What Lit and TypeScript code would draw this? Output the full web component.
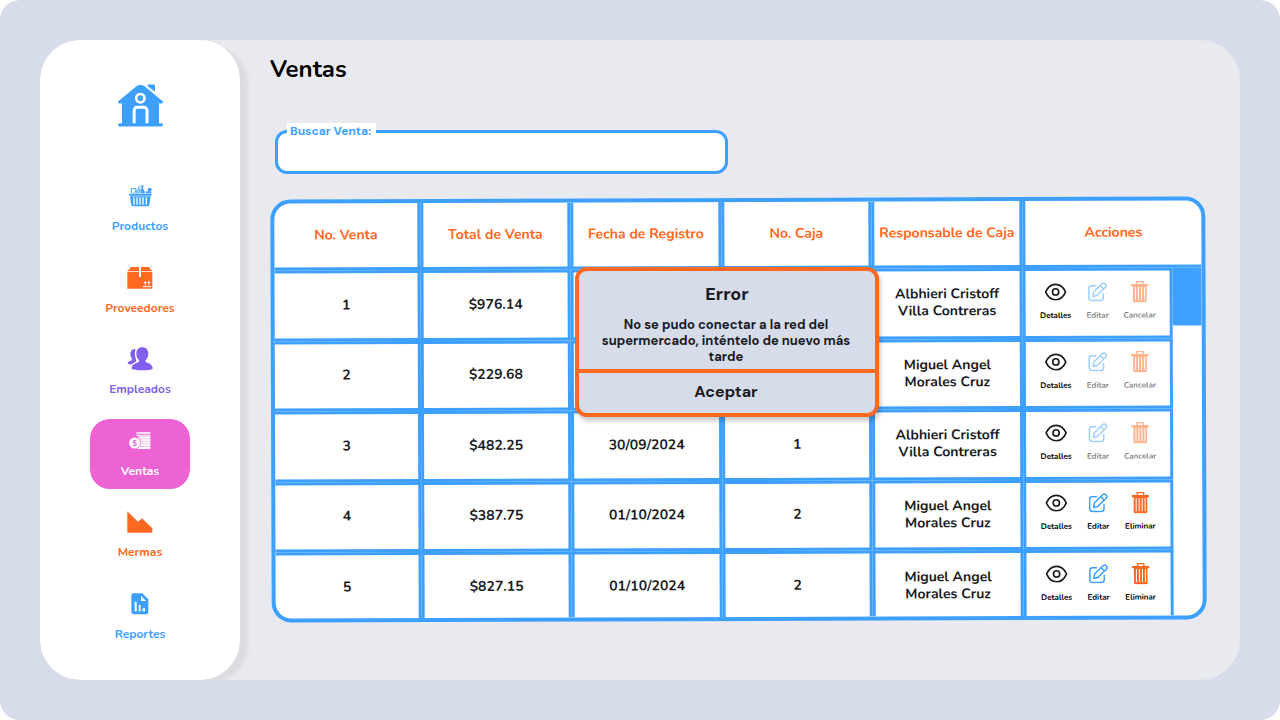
import { LitElement, html, svg, css, nothing } from "lit";
import { customElement, state } from "lit/decorators.js";
import { classMap } from "lit/directives/class-map.js";

interface Sale {
  id: number;
  total: string;
  date: string;
  register: number;
  owner: [string, string];
  locked: boolean;
}

const ALBHIERI: [string, string] = ["Albhieri Cristoff", "Villa Contreras"];
const MIGUEL: [string, string] = ["Miguel Angel", "Morales Cruz"];

const SALES: Sale[] = [
  { id: 1, total: "$976.14", date: "30/09/2024", register: 1, owner: ALBHIERI, locked: true },
  { id: 2, total: "$229.68", date: "30/09/2024", register: 1, owner: MIGUEL, locked: true },
  { id: 3, total: "$482.25", date: "30/09/2024", register: 1, owner: ALBHIERI, locked: true },
  { id: 4, total: "$387.75", date: "01/10/2024", register: 2, owner: MIGUEL, locked: false },
  { id: 5, total: "$827.15", date: "01/10/2024", register: 2, owner: MIGUEL, locked: false },
];

const houseIcon = html`<svg width="45" height="43" viewBox="84 44 135 128" aria-hidden="true">
  <path fill="currentColor" d="M85 95 L139 50 Q151 41 164 50 L218 95 Q221 101 215 102 H207 V161 H214 Q219 161 219 166 Q219 171 214 171 H89 Q84 171 84 166 Q84 161 89 161 H96 V102 H88 Q82 101 85 95Z"/>
  <path fill="currentColor" d="M173 45 H195 V67 L173 50Z"/>
  <circle cx="151" cy="86" r="12.5" fill="none" stroke="#fff" stroke-width="8"/>
  <path d="M132.500 161 V124 Q132.500 113 143 113 H160 Q171 113 171 124 V161" fill="none" stroke="#fff" stroke-width="9"/>
</svg>`;

const basketIcon = html`<svg width="23" height="22" viewBox="118 347 69 66" aria-hidden="true">
  <g fill="currentColor">
    <rect x="118" y="373" width="68" height="6" rx="2"/>
    <path d="M121 381 H183 L179 407 Q178 411 174 411 H130 Q126 411 125 407Z"/>
    <path d="M152 372 V366 L155 358 V353 H160 V358 L165 366 V372Z"/>
    <rect x="153" y="348" width="9" height="4"/>
    <circle cx="180" cy="361" r="6"/>
    <path d="M167 372 L170 365 L185 367 V372Z"/>
  </g>
  <path d="M125 372 V358 H139 V366 M131 372 L139 364 V372 M142 372 L149 350 M147 372 L151 358" fill="none" stroke="currentColor" stroke-width="3"/>
  <path d="M133 384 V406 M142 384 V406 M151 384 V406 M160 384 V406 M170 384 V406" stroke="#fff" stroke-width="4"/>
</svg>`;

const boxIcon = html`<svg width="26" height="22" viewBox="113 57 78 66" aria-hidden="true">
  <path fill="currentColor" d="M126 57 H178 L189 69 H114Z M114 71 H189 V122 H114Z"/>
  <path fill="#fff" d="M149 57 H155 V87 H149Z"/>
  <path d="M168 112 V102 M179 112 V102 M161 116 H186" stroke="#fff" stroke-width="3"/>
  <path fill="#fff" d="M163 105 L168 98 L173 105Z M174 105 L179 98 L184 105Z"/>
</svg>`;

const peopleIcon = html`<svg width="26" height="24" viewBox="112 293 78 72" aria-hidden="true">
  <g fill="currentColor">
    <path d="M138 299 C129 298 122 304 122 314 C122 320 124 325 127 328 V333 C120 335 114 338 114 342 Q114 345 119 345 H127 C130 341 134 339 139 337 C141 332 137 326 136 318 C135 311 136 304 138 299Z"/>
    <path d="M158 294 C147 294 140 302 140 313 C140 321 144 328 148 332 V338 C137 341 127 346 126 356 C125 362 142 363 158 363 C174 363 190 362 189 356 C188 346 178 341 168 338 V332 C172 328 176 321 176 313 C176 302 169 294 158 294Z"/>
  </g>
</svg>`;

const moneyIcon = html`<svg width="22" height="18" viewBox="149 68 66 54" aria-hidden="true">
  <path fill="#fff" d="M171 69 H213 V73 H171Z M171 76 H213 V79 H171Z M178 82 H213 V87 H182Z M184 90 H213 V94 H185Z M185 97 H213 V102 H185Z M184 105 H213 V110 H183Z M179 113 H213 V119 H172Z"/>
  <path fill="#fff" opacity="0.600" d="M176 79 H213 V119 H176Z"/>
  <circle cx="166" cy="101" r="18" fill="#ee63d3"/>
  <circle cx="166" cy="101" r="16.500" fill="#fff"/>
  <text x="166" y="110" text-anchor="middle" font-family="Lato, sans-serif" font-weight="700" font-size="25" fill="#ee63d3">$</text>
</svg>`;

const declineIcon = html`<svg width="26" height="22" viewBox="143 306 78 66" aria-hidden="true">
  <path fill="currentColor" d="M144 307 L176 338 L188 328 L219 358 V371 H144Z"/>
</svg>`;

const reportIcon = html`<svg width="18" height="22" viewBox="155 551 54 66" aria-hidden="true">
  <path fill="currentColor" d="M163 552 H189 L207 570 V608 Q207 615 200 615 H163 Q156 615 156 608 V559 Q156 552 163 552Z"/>
  <path fill="#fff" d="M185 559 V575 H200Z M166 577 H172 V606 H166Z M178 587 H184 V606 H178Z M190 597 H197 V606 H190Z"/>
</svg>`;

const eyeIcon = svg`<svg width="22" height="18" viewBox="74 71 67 54" aria-hidden="true" fill="none" stroke="currentColor" stroke-width="5">
  <path d="M77 98 C84 83 94 75 107.500 75 C121 75 131 83 138 98 C131 114 121 122 107.500 122 C94 122 84 114 77 98Z"/>
  <circle cx="107.500" cy="98" r="9.500"/>
</svg>`;

const editIcon = svg`<svg width="20" height="20" viewBox="205 68 60 60" aria-hidden="true" fill="none" stroke="currentColor" stroke-width="4.500" stroke-linejoin="round" stroke-linecap="round">
  <path d="M229 80 H217 Q209 80 209 88 V116 Q209 124 217 124 H244 Q252 124 252 116 V103"/>
  <path d="M221 112 L223 99 L248 74 Q253 70 258 74 Q263 79 259 84 L233 109Z M243 80 L253 90"/>
</svg>`;

const trashIcon = svg`<svg width="18" height="22" viewBox="335 65 54 66" aria-hidden="true">
  <path d="M353 76 V68 H372 V76" fill="none" stroke="currentColor" stroke-width="4"/>
  <path fill="currentColor" fill-rule="evenodd" d="M336 75 H388 V82 H383 V126 Q383 130 379 130 H346 Q342 130 342 126 V82 H336Z M348 84 V124 H351 V84Z M357 84 V124 H360 V84Z M366 84 V124 H369 V84Z M375 84 V124 H378 V84Z"/>
</svg>`;

const SECTIONS = [
  { name: "Productos", tone: "blue", icon: basketIcon },
  { name: "Proveedores", tone: "orange", icon: boxIcon },
  { name: "Empleados", tone: "purple", icon: peopleIcon },
  { name: "Ventas", tone: "current", icon: moneyIcon },
  { name: "Mermas", tone: "orange", icon: declineIcon },
  { name: "Reportes", tone: "blue", icon: reportIcon },
];

const palette = css`
  :host {
    --blue: #3da0ff;
    --orange: #ff6820;
    --purple: #835ff0;
    --pink: #ee63d3;
    --mist: #d6dcea;
    --ink: #1a1a1e;
    --rounded: "Nunito", "Lato", sans-serif;
    --plain: "DM Sans", "Inter", sans-serif;
    box-sizing: border-box;
  }
  * {
    box-sizing: border-box;
  }
`;

@customElement("side-menu")
class SideMenu extends LitElement {
  static styles = [
    palette,
    css`
      :host {
        display: flex;
        flex-direction: column;
        align-items: center;
        width: 200px;
        padding: 44px 0 28px;
        border-radius: 40px;
        background: #fff;
        box-shadow: 8px 4px 4px rgba(0, 0, 0, 0.06);
        font-family: var(--rounded);
      }
      .home {
        display: block;
        height: 43px;
        color: var(--blue);
      }
      .sections {
        flex: 1;
        display: flex;
        flex-direction: column;
        justify-content: space-between;
        margin-top: 47px;
      }
      .item {
        display: grid;
        grid-template-rows: 24px 20px;
        row-gap: 8px;
        place-items: center;
        width: 100px;
        height: 70px;
        padding-top: 10px;
        border-radius: 20px;
        font-size: 12px;
        font-weight: 700;
        line-height: 20px;
        text-decoration: none;
        align-content: start;
      }
      .blue {
        color: var(--blue);
      }
      .orange {
        color: var(--orange);
      }
      .purple {
        color: var(--purple);
      }
      .current {
        color: #fff;
        background: var(--pink);
      }
    `,
  ];

  render() {
    return html`
      <a class="home" href="#inicio" aria-label="Inicio">${houseIcon}</a>
      <nav class="sections">
        ${SECTIONS.map(
          (s) => html`<a
            class="item ${s.tone}"
            href="#${s.name.toLowerCase()}"
            aria-current=${s.tone === "current" ? "page" : nothing}
            >${s.icon}<span>${s.name}</span></a
          >`
        )}
      </nav>
    `;
  }
}

@customElement("sales-table")
class SalesTable extends LitElement {
  static styles = [
    palette,
    css`
      :host {
        display: block;
        border: 4px solid var(--blue);
        border-radius: 20px;
        background: #fff;
        overflow: hidden;
        transform: rotate(-0.2deg);
        font-family: var(--rounded);
        color: var(--ink);
      }
      table {
        width: 100%;
        table-layout: fixed;
        border-collapse: separate;
        border-spacing: 0;
      }
      th,
      td {
        padding: 0;
        border: 3px solid var(--blue);
        text-align: center;
        vertical-align: middle;
        font-size: 14px;
        font-weight: 700;
        line-height: 17px;
        white-space: nowrap;
      }
      th {
        height: 67px;
        padding-bottom: 2px;
        border-top: 0;
        color: var(--orange);
      }
      td {
        height: 70px;
        padding-bottom: 3px;
      }
      tr:nth-child(odd) td {
        height: 71px;
      }
      tr:last-child td {
        height: 66px;
        padding-bottom: 0;
        border-bottom: 0;
      }
      th:first-child,
      td:first-child {
        border-left: 0;
      }
      th:last-child {
        border-right: 0;
      }
      .narrow {
        width: 146px;
      }
      .mid {
        width: 150px;
      }
      .wide {
        width: 151px;
      }
      .bar {
        width: 29px;
      }
      .owner {
        display: block;
      }
      .actions {
        display: grid;
        grid-template-columns: repeat(3, 37px);
        column-gap: 5px;
        justify-content: center;
      }
      .action {
        display: grid;
        grid-template-rows: 24px 12px;
        row-gap: 6px;
        place-items: center;
        padding: 0 0 3px;
        border: 0;
        background: none;
        font-family: var(--rounded);
        font-size: 8px;
        font-weight: 700;
        line-height: 12px;
        color: #000;
      }
      .action:disabled {
        opacity: 0.5;
      }
      .look {
        color: var(--ink);
      }
      .edit {
        color: var(--blue);
      }
      .drop {
        color: var(--orange);
      }
      .glyph {
        display: flex;
      }
      tr td.track {
        height: auto;
        padding: 0;
        border: 0;
        vertical-align: top;
      }
      .thumb {
        height: 58px;
        border-radius: 0 0 0 2px;
        background: var(--blue);
      }
    `,
  ];

  private action(label: string, kind: string, icon: unknown, disabled = false) {
    return html`<button class="action" type="button" ?disabled=${disabled}>
      <span class="glyph ${kind}">${icon}</span><span>${label}</span>
    </button>`;
  }

  render() {
    return html`<table>
      <colgroup>
        <col class="narrow" />
        <col class="mid" />
        <col class="wide" />
        <col class="mid" />
        <col class="wide" />
        <col class="mid" />
        <col class="bar" />
      </colgroup>
      <thead>
        <tr>
          <th scope="col">No. Venta</th>
          <th scope="col">Total de Venta</th>
          <th scope="col">Fecha de Registro</th>
          <th scope="col">No. Caja</th>
          <th scope="col">Responsable de Caja</th>
          <th scope="col" colspan="2">Acciones</th>
        </tr>
      </thead>
      <tbody>
        ${SALES.map(
          (s, i) => html`<tr>
            <td>${s.id}</td>
            <td>${s.total}</td>
            <td>${s.date}</td>
            <td>${s.register}</td>
            <td>${s.owner.map((line) => html`<span class="owner">${line}</span>`)}</td>
            <td>
              <div class="actions">
                ${this.action("Detalles", "look", eyeIcon)}
                ${this.action("Editar", "edit", editIcon, s.locked)}
                ${this.action(s.locked ? "Cancelar" : "Eliminar", "drop", trashIcon, s.locked)}
              </div>
            </td>
            ${i === 0
              ? html`<td class="track" rowspan=${SALES.length}><div class="thumb"></div></td>`
              : nothing}
          </tr>`
        )}
      </tbody>
    </table>`;
  }
}

@customElement("app-root")
class AppRoot extends LitElement {
  @state() private alertOpen = true;

  static styles = [
    palette,
    css`
      :host {
        display: flex;
        min-height: 100vh;
        padding: 40px;
        border-radius: 20px;
        background: var(--mist);
      }
      .panel {
        flex: 1;
        display: flex;
        border-radius: 40px;
        background: #e9eaef;
        overflow: hidden;
      }
      main {
        flex: 1;
        min-width: 0;
        padding: 12px 34px 40px 30px;
      }
      h1 {
        margin: 0;
        font-family: var(--rounded);
        font-size: 24px;
        font-weight: 700;
        line-height: 34px;
        color: #000;
      }
      .search {
        position: relative;
        width: 453px;
        max-width: 100%;
        margin: 44px 0 24px 5px;
      }
      .search label {
        position: absolute;
        top: -7px;
        left: 12px;
        padding: 0 5px 0 3px;
        background: #fff;
        font-family: var(--plain);
        font-size: 12px;
        font-weight: 700;
        line-height: 16px;
        color: var(--blue);
      }
      .search input {
        display: block;
        width: 100%;
        height: 44px;
        padding: 8px 16px;
        border: 3px solid var(--blue);
        border-radius: 12px;
        outline: 0;
        background: #fff;
        font-family: var(--plain);
        font-size: 14px;
      }
      .records {
        position: relative;
        padding-left: 1px;
      }
      .alert {
        position: absolute;
        top: 69px;
        left: 305px;
        width: 304px;
        border: 4px solid var(--orange);
        border-radius: 12px;
        background: var(--mist);
        box-shadow: 2px 4px 4px rgba(0, 0, 0, 0.2);
        font-family: var(--plain);
        text-align: center;
        color: var(--ink);
      }
      .alert.closed {
        display: none;
      }
      .alert h2 {
        margin: 11px 0;
        font-size: 18px;
        font-weight: 700;
        line-height: 24px;
      }
      .alert p {
        margin: 0;
        padding: 0 22px 4px 20px;
        font-size: 13px;
        font-weight: 700;
        line-height: 16px;
      }
      .alert button {
        display: block;
        width: 100%;
        height: 44px;
        padding: 0 2px 4px 0;
        border: 0;
        border-top: 4px solid var(--orange);
        background: none;
        font-family: var(--plain);
        font-size: 16px;
        font-weight: 700;
        color: var(--ink);
      }
    `,
  ];

  render() {
    return html`<div class="panel">
      <side-menu></side-menu>
      <main>
        <h1>Ventas</h1>
        <div class="search">
          <input id="find" type="text" />
          <label for="find">Buscar Venta:</label>
        </div>
        <div class="records">
          <sales-table></sales-table>
          <div
            class=${classMap({ alert: true, closed: !this.alertOpen })}
            role="alertdialog"
            aria-labelledby="alert-title"
            aria-describedby="alert-text"
          >
            <h2 id="alert-title">Error</h2>
            <p id="alert-text">
              No se pudo conectar a la red del supermercado, inténtelo de nuevo más tarde
            </p>
            <button type="button" @click=${() => (this.alertOpen = false)}>Aceptar</button>
          </div>
        </div>
      </main>
    </div>`;
  }
}
